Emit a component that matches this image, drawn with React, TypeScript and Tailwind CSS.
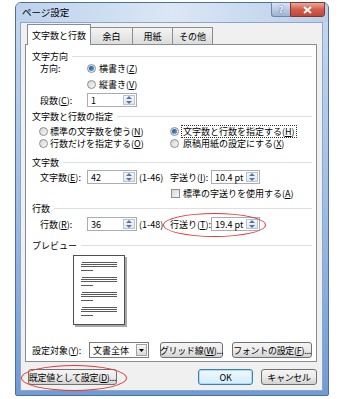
import React from "react";

function U({ children }: { children: React.ReactNode }) {
  return <span className="underline underline-offset-[1px]">{children}</span>;
}

function Radio({ checked }: { checked?: boolean }) {
  return (
    <span className="flex h-[9px] w-[9px] shrink-0 items-center justify-center rounded-full border border-[#8e8f8f] bg-gradient-to-br from-[#d4d4d4] to-[#f8f8f8]">
      {checked && (
        <span className="h-[5px] w-[5px] rounded-full bg-gradient-to-br from-[#0a4a86] to-[#5fb0ec]" />
      )}
    </span>
  );
}

function Check() {
  return (
    <span className="h-[9px] w-[9px] shrink-0 border border-[#8e8f8f] bg-gradient-to-br from-[#d8d8d8] to-[#f6f6f6]" />
  );
}

function Group({ title }: { title: string }) {
  return (
    <div className="flex h-[10px] items-center pl-[6px] pr-[4px]">
      <span className="leading-none">{title}</span>
      <span className="ml-[4px] h-px flex-1 bg-[#dcdfe3]" />
    </div>
  );
}

function Spin({ value, w }: { value: string; w: string }) {
  return (
    <div className={`flex h-[14px] items-stretch border border-[#abadb3] bg-white ${w}`}>
      <span className="flex flex-1 items-center pl-[3px] leading-none">{value}</span>
      <span className="m-px flex w-[12px] items-center justify-center border border-[#b7c4d4] bg-gradient-to-b from-[#f4f7fb] to-[#dfe7f1]">
        <svg width="6" height="8" viewBox="0 0 6 8">
          <path d="M0 3 L3 0 L6 3 Z" fill="#5677a6" />
          <path d="M0 5 L3 8 L6 5 Z" fill="#5677a6" />
        </svg>
      </span>
    </div>
  );
}

function Btn({
  children,
  w,
  primary,
}: {
  children: React.ReactNode;
  w: string;
  primary?: boolean;
}) {
  return (
    <div
      className={`flex h-[16px] items-center justify-center rounded-[3px] border leading-none ${w} ${
        primary
          ? "border-[#3c7fb1] bg-gradient-to-b from-[#f0f8fd] to-[#d6ecf8] shadow-[inset_0_0_0_1px_#a8dcf7]"
          : "border-[#707070] bg-gradient-to-b from-[#f4f4f4] via-[#ebebeb] to-[#d3d3d3]"
      }`}
    >
      <span className="whitespace-nowrap tracking-[-0.3px]">{children}</span>
    </div>
  );
}

function PagePreview() {
  const groups = [7, 22, 37, 52];
  return (
    <svg width="55" height="73" viewBox="0 0 55 73">
      <rect x="2" y="2" width="52" height="70" fill="#a9a9a9" />
      <rect x="0.5" y="0.5" width="51" height="69" fill="#ffffff" stroke="#4f4f4f" />
      {groups.map((g) => (
        <g key={g} fill="#5a5a5a">
          <rect x="9" y={g} width="35" height="1" />
          <rect x="8" y={g + 2} width="36" height="1" />
          <rect x="8" y={g + 4} width="36" height="1" />
          <rect x="8" y={g + 8} width="12" height="1" />
        </g>
      ))}
    </svg>
  );
}

export default function App() {
  return (
    <div className="relative h-[399px] w-[342px] overflow-hidden bg-white pl-[15px] pt-[2px] font-['Noto_Sans_CJK_JP','Noto_Sans',sans-serif] text-[9px] text-black">
      <div className="flex h-[394px] w-[314px] flex-col rounded-t-[6px] rounded-b-[2px] border border-[#4d6f99] bg-gradient-to-b from-[#c6d9ef] via-[#9fbee6] to-[#6f9bd6]">
        {/* title bar */}
        <div className="flex h-[19px] items-start justify-between rounded-t-[5px] bg-gradient-to-r from-[#bcd2ec] via-[#dbe7f5] to-[#b9cfea]">
          <span className="mt-[5px] pl-[6px] text-[9.5px] leading-none">ページ設定</span>
          <div className="-mt-px mr-[3px] flex h-[15px]">
            <div className="flex w-[19px] items-center justify-center rounded-bl-[3px] border border-r-0 border-[#6d87a8] bg-gradient-to-b from-[#d7e3f1] to-[#9db4d3] text-[9px] font-bold leading-none text-white [text-shadow:0_0_2px_#2b4a70]">
              ?
            </div>
            <div className="flex w-[35px] items-center justify-center rounded-br-[3px] border border-[#7b3a30] bg-gradient-to-b from-[#e9a89b] via-[#d25c4c] to-[#c3473a]">
              <svg width="9" height="8" viewBox="0 0 9 8">
                <path d="M1 1 L8 7 M8 1 L1 7" stroke="#ffffff" strokeWidth="2" />
              </svg>
            </div>
          </div>
        </div>

        {/* client */}
        <div className="ml-[4px] mr-[5px] flex h-[369px] flex-col border border-[#8fa7c6] bg-[#f0f0f0]">
          {/* tabs */}
          <div className="ml-[6px] mt-px flex h-[20px] items-end">
            <div className="relative z-10 -mb-px flex h-[21px] w-[64px] items-center justify-center border border-b-0 border-[#898c95] bg-white leading-none">
              文字数と行数
            </div>
            <div className="flex h-[17px] w-[42px] items-center justify-center border-r border-t border-[#898c95] bg-gradient-to-b from-[#f4f4f4] to-[#dcdcdc] leading-none">
              余白
            </div>
            <div className="flex h-[17px] w-[40px] items-center justify-center border-r border-t border-[#898c95] bg-gradient-to-b from-[#f4f4f4] to-[#dcdcdc] leading-none">
              用紙
            </div>
            <div className="flex h-[17px] w-[40px] items-center justify-center border-r border-t border-[#898c95] bg-gradient-to-b from-[#f4f4f4] to-[#dcdcdc] leading-none">
              その他
            </div>
          </div>

          {/* panel */}
          <div className="ml-[4px] flex h-[318px] w-[292px] flex-col border border-[#898c95] bg-white pt-[6px]">
            <Group title="文字方向" />
            <div className="flex h-[14px] items-center pl-[14px]">
              <span className="w-[47px] leading-none">方向:</span>
              <Radio checked />
              <span className="ml-[3px] leading-none">
                横書き(<U>Z</U>)
              </span>
            </div>
            <div className="mt-[2px] flex h-[14px] items-center pl-[61px]">
              <Radio />
              <span className="ml-[3px] leading-none">
                縦書き(<U>V</U>)
              </span>
            </div>
            <div className="mt-[2px] flex h-[14px] items-center pl-[14px]">
              <span className="w-[47px] leading-none">
                段数(<U>C</U>):
              </span>
              <Spin value="1" w="w-[50px]" />
            </div>

            <div className="mt-[4px]">
              <Group title="文字数と行数の指定" />
            </div>
            <div className="mt-[4px] flex h-[12px] items-center pl-[13px]">
              <div className="flex w-[131px] items-center">
                <Radio />
                <span className="ml-[2px] leading-none">
                  標準の文字数を使う(<U>N</U>)
                </span>
              </div>
              <Radio checked />
              <span className="ml-[2px] border border-dotted border-[#333] px-px py-px leading-none">
                文字数と行数を指定する(<U>H</U>)
              </span>
            </div>
            <div className="flex h-[12px] items-center pl-[13px]">
              <div className="flex w-[131px] items-center">
                <Radio />
                <span className="ml-[2px] leading-none">
                  行数だけを指定する(<U>O</U>)
                </span>
              </div>
              <Radio />
              <span className="ml-[4px] leading-none">
                原稿用紙の設定にする(<U>X</U>)
              </span>
            </div>

            <div className="mt-[8px]">
              <Group title="文字数" />
            </div>
            <div className="mt-[3px] flex h-[14px] items-center pl-[14px]">
              <span className="w-[47px] leading-none">
                文字数(<U>E</U>):
              </span>
              <Spin value="42" w="w-[50px]" />
              <span className="ml-[2px] w-[31px] leading-none">(1-46)</span>
              <span className="w-[41px] leading-none">
                字送り(<U>I</U>):
              </span>
              <Spin value="10.4 pt" w="w-[49px]" />
            </div>
            <div className="mt-[2px] flex h-[14px] items-center pl-[145px]">
              <Check />
              <span className="ml-[3px] leading-none">
                標準の字送りを使用する(<U>A</U>)
              </span>
            </div>

            <div className="mt-[3px]">
              <Group title="行数" />
            </div>
            <div className="mt-[4px] flex h-[14px] items-center pl-[14px]">
              <span className="w-[47px] leading-none">
                行数(<U>R</U>):
              </span>
              <Spin value="36" w="w-[50px]" />
              <span className="ml-[2px] w-[31px] leading-none">(1-48)</span>
              <span className="w-[41px] leading-none">
                行送り(<U>T</U>):
              </span>
              <Spin value="19.4 pt" w="w-[49px]" />
            </div>

            <div className="mt-[9px]">
              <Group title="プレビュー" />
            </div>
            <div className="ml-[47px] mt-[5px] h-[73px]">
              <PagePreview />
            </div>

            <div className="mt-[14px] flex h-[16px] items-center pl-[6px]">
              <span className="w-[57px] leading-none">
                設定対象(<U>Y</U>):
              </span>
              <div className="flex h-[16px] w-[60px] items-stretch border border-[#7a7a7a] bg-white">
                <span className="flex flex-1 items-center pl-[3px] leading-none">文書全体</span>
                <span className="m-px flex w-[11px] items-center justify-center border border-[#a0a0a0] bg-gradient-to-b from-[#f6f6f6] to-[#dadada]">
                  <svg width="5" height="3" viewBox="0 0 5 3">
                    <path d="M0 0 L5 0 L2.5 3 Z" fill="#000" />
                  </svg>
                </span>
              </div>
              <div className="ml-[11px]">
                <Btn w="w-[63px]">
                  グリッド線(<U>W</U>)...
                </Btn>
              </div>
              <div className="ml-[9px]">
                <Btn w="w-[80px]">
                  フォントの設定(<U>F</U>)...
                </Btn>
              </div>
            </div>
          </div>

          {/* bottom buttons */}
          <div className="mt-[7px] flex h-[16px] items-center pl-[7px] pr-[5px]">
            <Btn w="w-[89px]">
              既定値として設定(<U>D</U>)...
            </Btn>
            <div className="ml-auto">
              <Btn w="w-[55px]" primary>
                OK
              </Btn>
            </div>
            <div className="ml-[8px]">
              <Btn w="w-[56px]">キャンセル</Btn>
            </div>
          </div>
        </div>
      </div>

      {/* red annotation ellipses */}
      <div className="absolute left-[163px] top-[213px] h-[24px] w-[103px] rounded-[50%] border border-[#e23a3a]" />
      <div className="absolute left-[21px] top-[365px] h-[26px] w-[106px] rounded-[50%] border border-[#e23a3a]" />
    </div>
  );
}
